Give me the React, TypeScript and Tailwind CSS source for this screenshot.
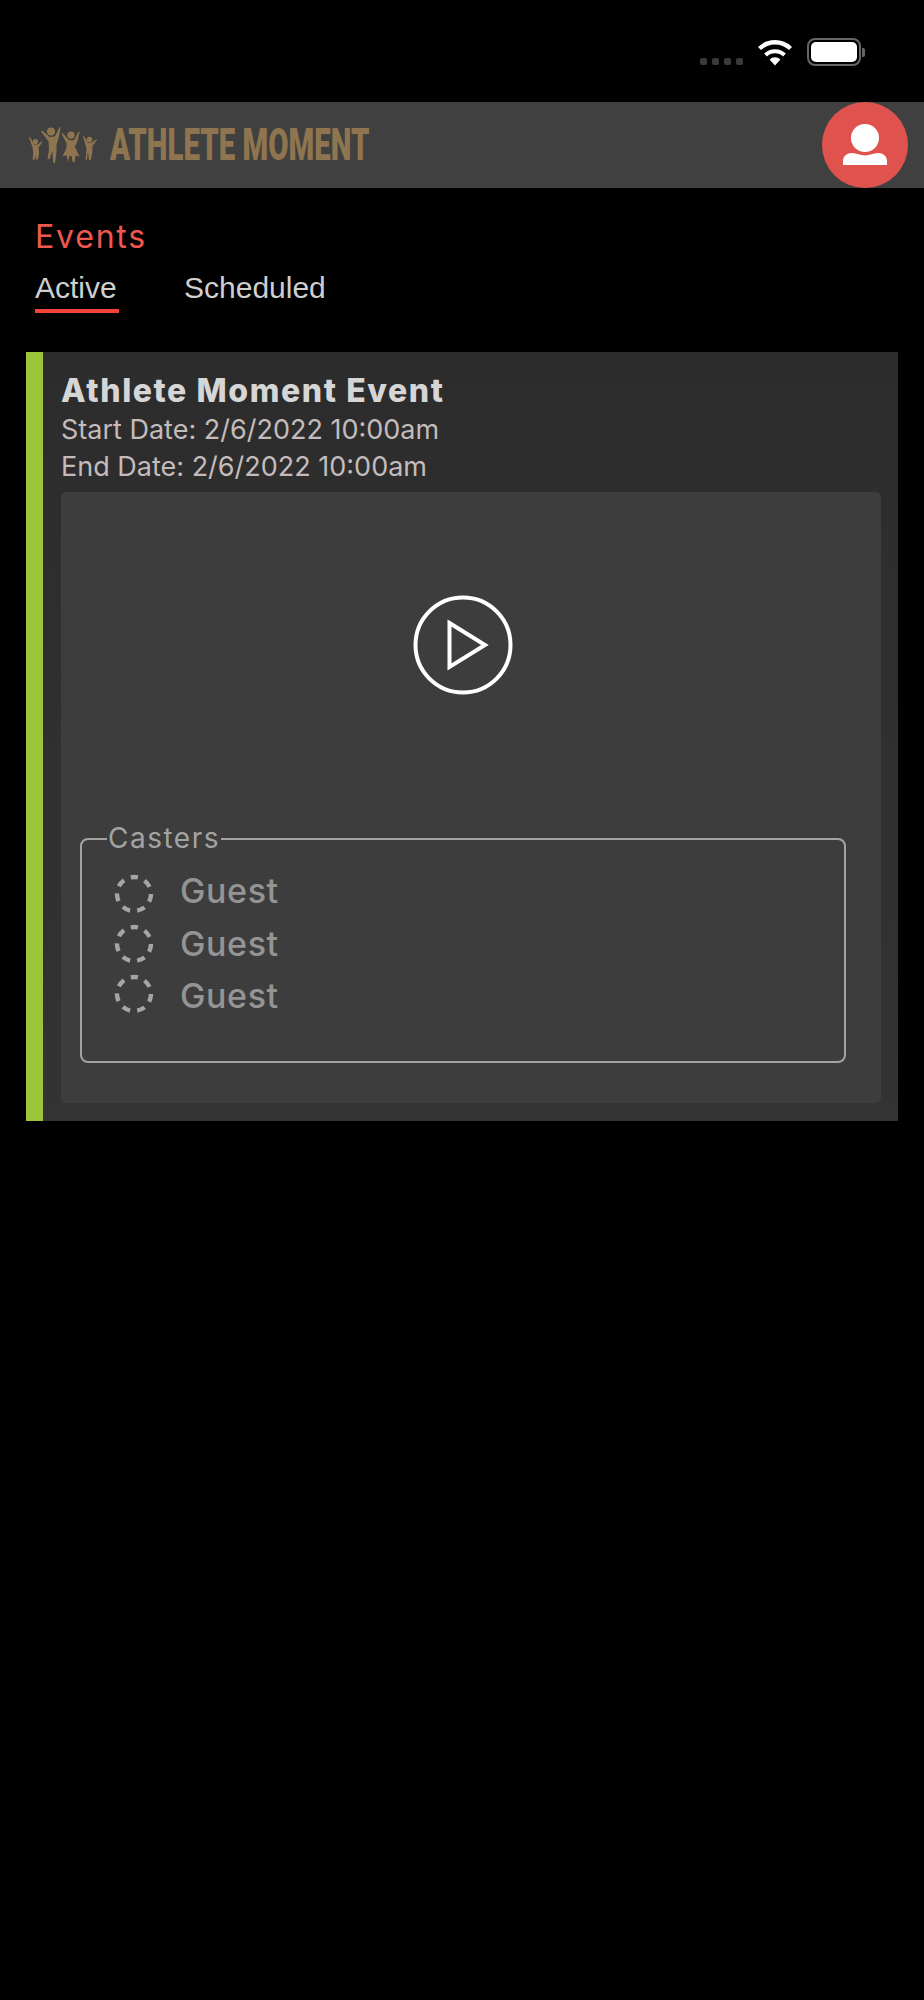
const StatusBar = () => {
  return (
    <div className="h-[102px] flex justify-end pr-[59px] pt-[38px]">
      <div className="flex items-start">
        <div className="flex gap-[5px] mt-[20px] mr-[14px]">
          {[0, 1, 2, 3].map((i) => (
            <div key={i} className="w-[7px] h-[7px] rounded-[2px] bg-[#3a3a3a]"></div>
          ))}
        </div>
        <svg width="36" height="28" viewBox="0 0 36 28" className="mr-[14px]">
          <path d="M18 27.5 L12.6 21.4 A8 8 0 0 1 23.4 21.4 Z" fill="#fff" />
          <path d="M8.5 17 A14 14 0 0 1 27.5 17" fill="none" stroke="#fff" strokeWidth="4" />
          <path d="M2.5 10.5 A22.5 22.5 0 0 1 33.5 10.5" fill="none" stroke="#fff" strokeWidth="4.4" />
        </svg>
        <div className="flex items-center">
          <div className="w-[54px] h-[28px] rounded-[8px] border-[2px] border-[#666] p-[2px]">
            <div className="w-full h-full rounded-[5px] bg-white"></div>
          </div>
          <div className="w-[3px] h-[9px] ml-[1px] rounded-r-[2px] bg-[#666]"></div>
        </div>
      </div>
    </div>
  );
};

const LogoFigures = () => {
  return (
    <svg width="70" height="38" viewBox="0 0 70 38" fill="#8f754f">
      <circle cx="7.5" cy="15.5" r="2.6" />
      <path d="M1 11.5 L2.2 11 L6 18.5 L10 18.5 L13.6 15.5 L14.3 16.5 L10.6 21 L11 27 L10 33.5 L7.8 33.5 L7.4 28.5 L6.6 33.8 L4.6 33.8 L5.2 27 L4.6 21.5 Z" />
      <circle cx="23" cy="5.6" r="4" />
      <path d="M13 5.5 L14.2 4.5 L21.5 11 L27 10.5 L31.6 1 L32.6 1.4 L30.6 12 L28.6 18 L28.4 27 L27 37.5 L25 36 L24.4 25 L21.5 33 L19.5 33 L21 24 L20.6 15.5 Z" />
      <circle cx="43" cy="9.2" r="3.6" />
      <path d="M33.5 7.5 L34.6 7 L41 14.2 L46 14.2 L50.6 5.5 L51.6 6 L49.4 15.5 L46.8 20.5 L51.6 30.4 L47.6 29.4 L46.6 36.5 L44.4 35.5 L43.6 30 L41.2 30 L40.4 36.5 L38.6 29.6 L34.8 30 L38.6 21.5 L38.6 17.6 Z" />
      <g transform="translate(2 0)">
        <circle cx="59.5" cy="13.5" r="2.8" />
        <path d="M53 10.5 L54 10 L58 16.8 L62 16.6 L66.4 13.2 L67 14.2 L62.6 19.6 L62.2 27 L60.6 34.5 L58.8 33.8 L58.4 27.5 L57.6 27 L57 34 L55.6 33.4 L56.6 22.5 Z" />
      </g>
    </svg>
  );
};

const Header = () => {
  return (
    <header className="relative h-[86px] flex items-center pl-[28px] bg-[#404040]">
      <LogoFigures />
      <div className="ml-[12px] w-[260px] h-[40px] overflow-visible">
        <span className="block w-max origin-top-left scale-x-[0.653] font-['Roboto',sans-serif] font-black text-[45px] leading-[40px] text-[#8f754f]">
          ATHLETE MOMENT
        </span>
      </div>
      <div className="absolute right-[16px] top-0 w-[86px] h-[86px] rounded-full bg-[#e0524d] flex items-center justify-center">
        <svg width="44" height="44" viewBox="0 0 44 44" fill="#fff">
          <circle cx="22" cy="15" r="14" />
          <path d="M0 42 V38 C0 33 4 30 9 30 C14 30 17 32.5 22 32.5 C27 32.5 30 30 35 30 C40 30 44 33 44 38 V42 Z" />
        </svg>
      </div>
    </header>
  );
};

const Tabs = () => {
  return (
    <div className="pl-[35px] pt-[31px]">
      <h2 className="font-['Inter',sans-serif] text-[32px] tracking-[1.8px] leading-[36px] text-[#f0584f]">Events</h2>
      <div className="flex mt-[13px] font-['Liberation_Sans',sans-serif] text-[30px] leading-[40px] text-[#cfcfcf]">
        <div className="w-[84px] h-[45px] border-b-[4px] border-[#f44336]">Active</div>
        <div className="ml-[65px]">Scheduled</div>
      </div>
    </div>
  );
};

const CasterRing = () => {
  return (
    <svg width="40" height="40" viewBox="0 0 40 40" fill="none">
      <circle cx="20" cy="20" r="17" stroke="#a5a5a5" strokeWidth="4.4" strokeDasharray="8 7.26" strokeDashoffset="4" transform="rotate(-90 20 20)" />
    </svg>
  );
};

const casters = ["Guest", "Guest", "Guest"];

const EventCard = () => {
  return (
    <div className="mx-[26px] mt-[39px] h-[769px] flex border-l-[17px] border-[#9dc53c] bg-linear-to-b from-[#2c2c2c] to-[#333333]">
      <div className="flex-1 pl-[18px] pr-[17px] pt-[21px]">
        <h3 className="font-['Inter',sans-serif] font-extrabold text-[32px] tracking-[1.6px] leading-[36px] text-[#d6d6d6]">Athlete Moment Event</h3>
        <p className="mt-[2px] font-['Inter',sans-serif] text-[27px] leading-[37px] text-[#c4bcbc]">Start Date: 2/6/2022 10:00am</p>
        <p className="font-['Inter',sans-serif] text-[27px] leading-[37px] text-[#c4bcbc]">End Date: 2/6/2022 10:00am</p>
        <div className="mt-[7px] h-[611px] rounded-[5px] bg-[#3d3d3d] pt-[103px]">
          <div className="flex justify-center pr-[16px]">
            <svg width="100" height="100" viewBox="0 0 100 100" fill="none" stroke="#fff" strokeWidth="4">
              <circle cx="50" cy="50" r="47.5" />
              <path d="M36.5 28 L72 50 L36.5 72 Z" />
            </svg>
          </div>
          <fieldset className="mt-[128px] mx-[19px] w-[766px] h-[240px] rounded-[8px] border-[2px] border-[#a3a3a3]">
            <legend className="ml-[25px] px-[1px] pb-[2px] font-['Inter',sans-serif] text-[28px] tracking-[1.5px] leading-[30px] text-[#a3a3a3]">Casters</legend>
            <div className="flex mt-[10px] pl-[32px]">
              <div className="flex flex-col gap-[10px] mt-[9px]">
                {casters.map((c, i) => (
                  <CasterRing key={i} />
                ))}
              </div>
              <div className="ml-[26px]">
                {casters.map((c, i) => (
                  <div key={i} className="font-['Inter',sans-serif] font-medium text-[34px] tracking-[0.6px] leading-[52.5px] text-[#949494]">{c}</div>
                ))}
              </div>
            </div>
          </fieldset>
        </div>
      </div>
    </div>
  );
};

const App = () => {
  return (
    <div className="w-[924px] h-[2000px] overflow-hidden bg-black">
      <StatusBar />
      <Header />
      <Tabs />
      <EventCard />
    </div>
  );
};

export default App;
